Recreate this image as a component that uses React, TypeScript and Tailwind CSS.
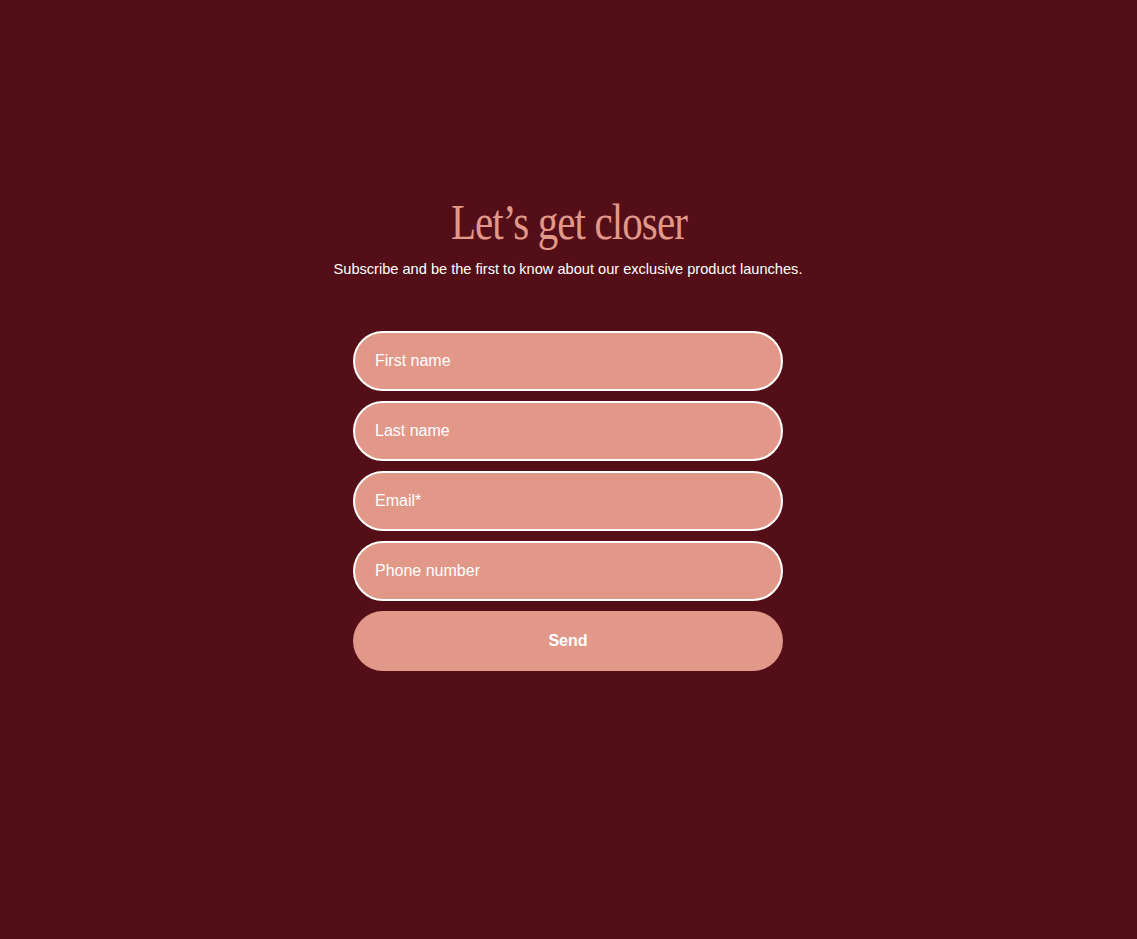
import React, { useState } from 'react';

const FIELDS = [
  { name: 'firstName', placeholder: 'First name', type: 'text' },
  { name: 'lastName', placeholder: 'Last name', type: 'text' },
  { name: 'email', placeholder: 'Email*', type: 'email' },
  { name: 'phone', placeholder: 'Phone number', type: 'tel' },
];

const App: React.FC = () => {
  const [values, setValues] = useState<Record<string, string>>({});

  return (
    <div className="min-h-[939px] w-full bg-[#530e17] flex flex-col items-center pt-[194px]">
      <h1 className="font-['Liberation_Serif',serif] text-[50px] leading-[56px] tracking-[-1.1px] text-[#e29889] scale-x-[0.82]">
        Let’s get closer
      </h1>
      <p className="mt-[8px] mr-px font-['Liberation_Sans',Arial,sans-serif] text-[14.6px] leading-[22px] text-white">
        Subscribe and be the first to know about our exclusive product launches.
      </p>

      <form
        className="mt-[51px] mr-px w-[430px] flex flex-col gap-[10px]"
        onSubmit={(e) => e.preventDefault()}
      >
        {FIELDS.map((f) => (
          <input
            key={f.name}
            type={f.type}
            placeholder={f.placeholder}
            value={values[f.name] || ''}
            onChange={(e) => setValues({ ...values, [f.name]: e.target.value })}
            className="h-[60px] w-full rounded-full border-2 border-white bg-[#e29889] px-[20px] pb-px font-['Liberation_Sans',Arial,sans-serif] text-[16px] text-white placeholder:text-white outline-none"
          />
        ))}
        <button
          type="submit"
          className="h-[60px] w-full rounded-full bg-[#e29889] pb-px font-['Liberation_Sans',Arial,sans-serif] text-[16px] font-bold text-white"
        >
          Send
        </button>
      </form>
    </div>
  );
};

export default App;
